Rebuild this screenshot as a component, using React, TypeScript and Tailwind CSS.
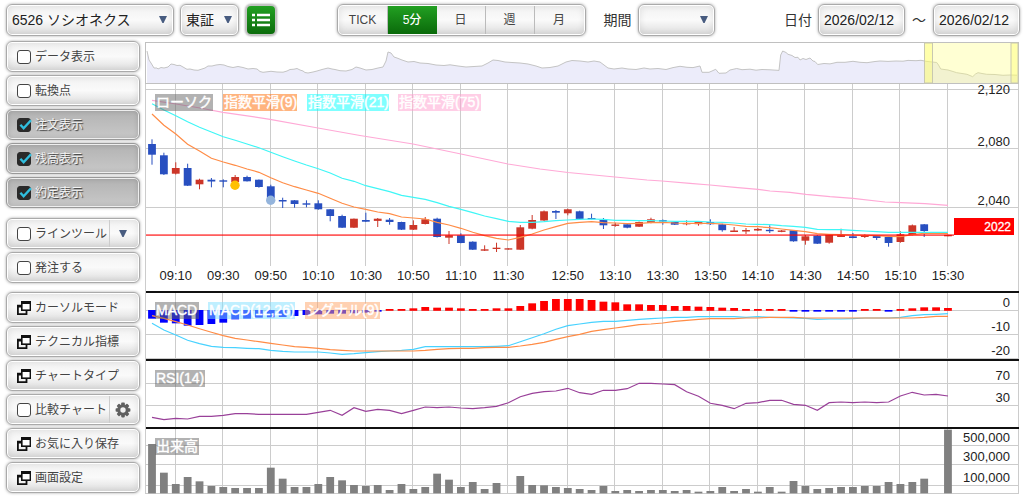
import { useState, type ReactNode } from "react";

const FACE =
  "border border-[#aaa] rounded-md shadow-[0_0_3px_rgba(0,0,0,0.35),inset_0_0_0_1px_#fff,inset_0_0_6px_2px_rgba(0,0,0,0.08)] bg-linear-to-b from-[#f2f2f2] via-[#fafafa] to-[#dcdcdc]";
const FACE_ON =
  "border border-[#999] rounded-md shadow-[0_0_3px_rgba(0,0,0,0.35),inset_0_0_0_1px_#eee,inset_0_0_5px_1px_rgba(0,0,0,0.15)] bg-linear-to-b from-[#b2b2b2] to-[#c9c9c9]";

const STEP = 11.88;
const cx = (i: number) => 152 + i * STEP;
const line = (values: number[], base: number) =>
  values.map((v, i) => `${cx(i).toFixed(1)},${(base + v / 3).toFixed(1)}`).join(" ");

// slot, body top, body bottom, high, low, rising
const candles: [number, number, number, number, number, number][] = [
  [0, 144, 154.7, 139.3, 164.7, 0], [1, 155.3, 174.3, 152.7, 175, 0], [2, 168, 173.7, 162.3, 174.5, 1],
  [3, 168, 185.7, 163.7, 186, 0], [4, 179.7, 184.3, 178.7, 189.3, 1], [5, 179.7, 181.5, 178, 187.3, 0],
  [6, 180.3, 181.7, 179.3, 187.3, 0], [7, 177, 182, 175, 182, 1], [8, 177, 181.3, 175.7, 181.5, 0],
  [9, 179.7, 187, 179.5, 187.7, 0], [10, 186.3, 198, 184.7, 198, 0], [11, 200, 201.5, 197.7, 208, 0],
  [12, 200.3, 204, 200, 207.7, 0], [13, 203.3, 204.7, 200.3, 207.3, 0], [14, 203.3, 209.3, 200.3, 209.7, 0],
  [15, 209.3, 216, 209, 221.3, 0], [16, 216, 227.7, 214.7, 228, 0], [17, 218.7, 227.7, 218.5, 228, 1],
  [18, 220, 221.7, 212.7, 222, 0], [19, 218.7, 220.9, 218, 227, 1], [20, 219.7, 222, 218, 224.7, 0],
  [21, 222, 229.7, 221.7, 230, 0], [22, 225, 229.7, 220.3, 230, 1], [23, 219.3, 224, 217, 224.5, 1],
  [24, 218.7, 237, 217.7, 237.5, 0], [25, 235.3, 237.7, 231, 244, 1], [26, 235.3, 243, 233.3, 243.3, 0],
  [27, 241.7, 249.7, 241.3, 250, 0], [28, 249.3, 250.7, 245.3, 251, 1], [29, 247.7, 249, 242.7, 252, 1],
  [30, 248.3, 249.6, 248.3, 249.6, 1], [31, 227.3, 249.7, 225, 250, 1], [32, 220, 228.7, 215, 229.3, 1],
  [33, 211.3, 220.5, 210.5, 221, 1], [34, 211, 212.7, 210, 219, 0], [35, 209.3, 213.3, 208.7, 215.3, 1],
  [36, 211.3, 218.9, 210.7, 219, 0], [37, 218, 219.2, 213.7, 219.2, 0], [38, 220, 225.3, 218, 229, 0],
  [39, 224.5, 225.9, 222.7, 226.7, 1], [40, 224.3, 227.7, 223.7, 228.3, 0], [41, 222, 226.7, 221.5, 227, 1],
  [42, 219.3, 223, 217.7, 223.3, 1], [43, 220.1, 221.5, 219.5, 224.7, 0], [44, 222, 224.7, 221.5, 225, 0],
  [45, 223, 224.3, 220.3, 225.3, 1], [46, 221.7, 224.2, 221.3, 225.7, 1], [47, 222, 224.2, 219.3, 225, 0],
  [48, 224.3, 230.2, 223.7, 231.7, 0], [49, 230.5, 232, 227, 232, 1], [50, 230, 231.5, 228, 234, 1],
  [51, 228.9, 230.5, 228, 231, 1], [52, 229.8, 231.2, 225.3, 233, 0], [53, 230.5, 231.9, 230, 232.2, 1],
  [54, 230.3, 241.3, 230, 241.7, 0], [55, 236.3, 240.7, 235, 244.7, 1], [56, 235.7, 243.7, 235, 244, 0],
  [57, 234.7, 242.7, 234.3, 243.7, 1], [58, 235.3, 237, 228.7, 237, 1], [59, 236.3, 238, 233, 238.3, 0],
  [60, 235.7, 237, 234.3, 238, 1], [61, 236, 238, 235.7, 240, 0], [62, 237, 243, 236.7, 246.7, 0],
  [63, 234.3, 242, 231.3, 242.7, 1], [64, 225.3, 235, 224.5, 235.3, 1], [65, 224.3, 231, 224, 237, 0],
  [67, 234.9, 236.3, 234.9, 236.3, 1],
];

const ema9 = [102, 136, 162, 193, 213, 235, 246, 256, 267, 277, 293, 308, 320, 330, 340, 355, 370, 381, 388, 396, 401, 411, 414, 417, 427, 435, 445, 457, 467, 475, 480, 472, 462, 450, 440, 430, 427, 425, 428, 429, 431, 430, 428, 427, 429, 430, 430, 430, 432, 435, 439, 440, 443, 447, 451, 455, 461, 463, 464, 465, 466, 467, 469, 470, 464, 460, 460, 460];
const ema21 = [71, 90, 107, 125, 142, 156, 170, 181, 192, 203, 217, 230, 243, 255, 266, 279, 295, 304, 317, 326, 335, 346, 352, 358, 368, 379, 388, 398, 408, 416, 424, 427, 427, 425, 422, 420, 418, 417, 418, 421, 421, 422, 422, 423, 424, 424, 424, 426, 427, 429, 432, 433, 434, 437, 439, 442, 448, 449, 449, 451, 453, 455, 457, 457, 457, 457, 457, 457];
const ema75 =
  "152,100.3 176,104 200,108 223,112.3 270,119.3 318,128 360,135.5 413,144 461,154 508,164 540,169 568,172.5 615,177 647,180 662,181 690,183.3 710,185 735,187.3 758,189.3 770,191 790,192.3 806,194.3 830,196.7 853,198.3 885,202 901,202.7 925,203.7 948,205.3";

const histogram = [101, 113, 115, 122, 120, 117, 113, 103, 101, 98, 97, 96, 93, 90, 88, 86, 86, 85, 83, 80, 72, 72, 70, 66, 68, 68, 70, 72, 72, 70, 70, 63, 55, 48, 42, 42, 42, 45, 50, 52, 58, 58, 60, 60, 63, 63, 65, 66, 68, 69, 72, 72, 72, 72, 80, 80, 80, 80, 80, 80, 72, 72, 80, 72, 70, 67, 67, 69];
const macd = [115, 135, 150, 166, 176, 184, 187, 188, 190, 191, 196, 199, 201, 201, 201, 204, 208, 206, 203, 200, 198, 196, 193, 185, 185, 185, 185, 185, 185, 184, 182, 170, 158, 146, 133, 122, 117, 112, 109, 109, 106, 103, 101, 99, 97, 97, 95, 95, 95, 95, 97, 95, 97, 98, 99, 100, 103, 102, 102, 101, 99, 99, 99, 97, 92, 89, 88, 86];
const signal = [92, 100, 110, 120, 131, 142, 152, 160, 165, 170, 175, 180, 185, 187, 190, 194, 196, 198, 198, 198, 198, 198, 198, 196, 193, 191, 190, 190, 188, 187, 187, 183, 178, 172, 163, 155, 148, 139, 134, 129, 124, 119, 117, 114, 109, 106, 103, 101, 101, 101, 99, 99, 97, 97, 97, 99, 99, 99, 99, 99, 99, 99, 99, 99, 99, 97, 94, 94];
const rsi = [397, 404, 400, 402, 394, 394, 391, 386, 386, 388, 388, 388, 388, 388, 382, 376, 391, 368, 379, 373, 376, 386, 376, 366, 368, 366, 369, 371, 368, 364, 353, 335, 325, 320, 318, 310, 323, 328, 316, 316, 311, 295, 295, 297, 299, 320, 334, 355, 361, 371, 355, 353, 346, 346, 358, 361, 376, 353, 351, 353, 351, 353, 351, 333, 322, 330, 328, 333];
const volume = [477, 563, 597, 576, 589, 603, 606, 609, 609, 609, 548, 581, 606, 606, 597, 576, 586, 600, 603, 600, 615, 597, 612, 606, 566, 584, 606, 591, 612, 594, 625, 573, 600, 601, 606, 609, 612, 615, 603, 618, 615, 618, 615, 615, 618, 615, 620, 618, 606, 618, 612, 620, 606, 620, 588, 603, 612, 609, 606, 606, 603, 603, 591, 597, 591, 581, 625, 434];

const overview =
  "147,51 149,60 151,63 154,68 157,68 158,69 161,67.5 164,68 168,67 171,64 174,64.5 177,65.5 180,65.3 183,67 187,69.3 190,69 194,70 198,70.3 202,69 205,68 208,66 212,66 216,65 220,64.5 224,65 228,66.5 233,67.5 238,66.5 243,67.5 248,69 253,68.5 257,69 260,71.5 263,72.3 267,71.8 271,71.3 277,72 283,72.2 287,71 290,69.5 294,69.2 297,68.5 300,70 303,71 305,72.5 308,73 313,72 317,71 322,69.5 328,68 332,69 335,69.5 340,70.7 346,71 352,69.5 356,67 360,68 366,70 372,69.5 378,68 383,67 386,61 388,52 391,53 394,57 397,58 402,60 408,62 414,61.5 420,63 428,63.5 436,65 444,65.5 450,64.8 458,66 466,67 474,66.5 482,66 488,63 493,60 498,60.5 505,62 512,62.5 520,63 528,64 536,66 542,68 550,67.5 558,66 566,62 572,60.5 580,61 588,62 594,61 600,62 608,68 614,69 622,68 628,69 636,69.5 644,68 650,69 658,68.5 666,69.5 673,67.6 680,66.3 687,67.3 693,67.6 700,66 702,72.3 709,72.3 712,71 715.7,69.3 719,73.3 726,73 730,70 736.7,68.5 742,69.7 750,69.2 756,70.2 762,69.5 770,69.8 779,70.4 780.7,55 782.7,51 786,52.5 788,54.3 792,55.5 795,57.5 798,57.3 800,60 803,58.5 806,59.5 810,58 813,61 815,61.5 817.7,64.5 824,63.5 830,63.9 837,62.3 845,62.3 853,61.3 860,62.3 867,62.7 875,61.5 880,61 888,61.4 896,61 903,61.2 908,60.4 916,60.7 921,60.3 926,61.3 932,62 936.7,62.5 938.5,65 940.7,69 948,70 952,71.2 956.7,72.7 962,73.5 967,74.3 972.7,76.7 975.5,74 978,72.7 982,73.5 986.7,74.3 995,74.5 1003,75.3 1010,75 1017,75.2";

const timeTicks: [number, string][] = [
  [2, "09:10"], [6, "09:30"], [10, "09:50"], [14, "10:10"], [18, "10:30"], [22, "10:50"], [26, "11:10"], [30, "11:30"],
  [35, "12:50"], [39, "13:10"], [43, "13:30"], [47, "13:50"], [51, "14:10"], [55, "14:30"], [59, "14:50"], [63, "15:10"], [67, "15:30"],
];

const axisLabels: [number, string][] = [
  [94, "2,120"], [146, "2,080"], [205, "2,040"], [307, "0"], [331, "-10"], [355, "-20"],
  [380, "70"], [402, "30"], [442, "500,000"], [461, "300,000"], [482, "100,000"],
];

const tags: { x: number; y: number; w: number; fill: string; text: string }[] = [
  { x: 155, y: 94, w: 58, fill: "#666666", text: "ローソク" },
  { x: 223, y: 94, w: 74, fill: "#ff6a00", text: "指数平滑(9)" },
  { x: 307, y: 94, w: 82, fill: "#00ffff", text: "指数平滑(21)" },
  { x: 398, y: 94, w: 83, fill: "#ff9dce", text: "指数平滑(75)" },
  { x: 155, y: 302, w: 44, fill: "#666666", text: "MACD" },
  { x: 208, y: 302, w: 87, fill: "#7fdfff", text: "MACD(12,26)" },
  { x: 305, y: 302, w: 75, fill: "#ffa366", text: "シグナル(9)" },
  { x: 155, y: 370, w: 50, fill: "#666666", text: "RSI(14)" },
  { x: 155, y: 438, w: 44, fill: "#666666", text: "出来高" },
];

function Chart() {
  return (
    <svg
      viewBox="145 41 875 454"
      className="block w-full h-auto font-['Liberation_Sans','Noto_Sans_CJK_JP',sans-serif]"
      role="img"
      aria-label="6526 ソシオネクス 5分"
    >
      <polygon points={`147,83 ${overview} 1017,83`} fill="#ececfa" />
      <polyline points={overview} fill="none" stroke="#c4c4c4" />
      <rect x="145.5" y="42.5" width="873" height="41" fill="none" stroke="#c0c0c0" />
      <rect x="924.5" y="43" width="93.5" height="40" fill="#ffff80" fillOpacity="0.35" />
      <rect x="924.5" y="43" width="8" height="40" fill="#ffff60" fillOpacity="0.35" stroke="#c8c8b0" />
      <rect x="1011" y="43" width="7" height="40" fill="#ffff60" fillOpacity="0.35" stroke="#c8c8b0" />

      <g stroke="#cccccc">
        {[89.5, 148.5, 207.5, 310.5, 334.5, 358.5, 383.5, 405.5, 445.5, 464.5, 485.5, 493.5].map((y) => (
          <line key={y} x1="146" x2="1018" y1={y} y2={y} />
        ))}
        {timeTicks.map(([i]) => (
          <path key={i} d={`M${Math.round(cx(i)) - 0.5} 84V266M${Math.round(cx(i)) - 0.5} 293V493`} />
        ))}
        <path d="M145.5 84V494M1018.5 84V494" />
      </g>

      {candles.map(([i, top, bottom, high, low, up]) => (
        <g key={i} fill={up ? "#cc3628" : "#284fc0"}>
          <rect x={cx(i) - 0.5} y={high} width="1" height={low - high} />
          <rect x={cx(i) - 3.9} y={top} width="7.8" height={bottom - top} />
        </g>
      ))}
      <g fill="none" strokeWidth="1.2">
        <polyline points={ema75} stroke="#ffa9d6" />
        <polyline points={line(ema9, 80)} stroke="#ff8c46" />
        <polyline points={line(ema21, 80)} stroke="#3ff6f6" />
      </g>
      <rect x="146" y="234.3" width="808" height="1.6" fill="#ff0000" fillOpacity="0.7" />
      <circle cx="235" cy="185.3" r="4.7" fill="#ffc000" />
      <circle cx="270.7" cy="200.3" r="4.7" fill="#94b4dc" />

      {histogram.map((v, i) => {
        const y = 285 + v / 3;
        const down = v > 76;
        return (
          <rect key={i} x={cx(i) - 3.9} width="7.8" y={down ? 310 : y} height={down ? y - 310 : 310.8 - y} fill={down ? "#0000ff" : "#ff0000"} />
        );
      })}
      <g fill="none" strokeWidth="1.2">
        <polyline points={line(macd, 285)} stroke="#48d2ff" />
        <polyline points={line(signal, 285)} stroke="#ff8c46" />
        <polyline points={line(rsi, 285)} stroke="#994099" />
      </g>
      {volume.map((v, i) => (
        <rect key={i} x={cx(i) - 3.9} width="7.8" y={285 + v / 3} height={(625 - v) / 3} fill="#808080" />
      ))}

      <g fill="#111111">
        {[291, 359, 427].map((y) => (
          <rect key={y} x="146" y={y} width="873" height="2" />
        ))}
      </g>

      {tags.map((t) => (
        <g key={`${t.text}${t.x}`}>
          <rect x={t.x} y={t.y} width={t.w} height="17" fill={t.fill} fillOpacity="0.5" />
          <text x={t.x + 1} y={t.y + 13} fontSize="14" fill="#ffffff" stroke="#ffffff" strokeWidth="0.4">
            {t.text}
          </text>
        </g>
      ))}

      <g fontSize="13" fill="#222222">
        {timeTicks.map(([i, label]) => (
          <text key={label} x={cx(i)} y="280" textAnchor="middle">
            {label}
          </text>
        ))}
        {axisLabels.map(([y, label]) => (
          <text key={label} x="1010" y={y} textAnchor="end">
            {label}
          </text>
        ))}
      </g>
      <rect x="954" y="218" width="60" height="17" fill="#ff0000" />
      <text x="1011" y="231" fontSize="12" fill="#ffffff" stroke="#ffffff" strokeWidth="0.3" textAnchor="end">
        2022
      </text>
    </svg>
  );
}

function Caret({ className = "" }: { className?: string }) {
  return (
    <svg viewBox="0 0 8 7" className={`h-[7px] w-2 ${className}`} aria-hidden="true">
      <path d="M0 0H8L4.6 7H3.4Z" fill="#485c80" />
    </svg>
  );
}

function Picker({ label, options, width }: { label: string; options: string[]; width: string }) {
  return (
    <span className={`relative inline-flex ${width}`}>
      <select
        aria-label={label}
        className={`h-8 w-full appearance-none pl-[5px] pr-5 text-sm text-[#222] ${FACE}`}
      >
        {options.map((o) => (
          <option key={o}>{o}</option>
        ))}
      </select>
      <Caret className="pointer-events-none absolute right-[7px] top-3" />
    </span>
  );
}

function Toggle({ label, initial = false, extra }: { label: string; initial?: boolean; extra?: ReactNode }) {
  const [on, setOn] = useState(initial);
  return (
    <div className={`flex h-[31px] items-center ${on ? FACE_ON : FACE}`}>
      <label
        className={`flex h-full flex-1 items-center gap-1 pl-[10px] whitespace-nowrap ${
          on ? "text-[#f4f4f4] [text-shadow:1px_1px_1px_#333]" : "text-[#444]"
        }`}
      >
        <span className="relative flex size-[14px] shrink-0">
          <input
            type="checkbox"
            checked={on}
            onChange={() => setOn(!on)}
            className="size-[14px] appearance-none rounded-[3px] border border-[#444] bg-white checked:border-[#2a2a2a] checked:bg-[#2a2a2a]"
          />
          {on && (
            <svg viewBox="0 0 16 14" className="pointer-events-none absolute left-0 top-0 h-[14px] w-4" aria-hidden="true">
              <path d="M3.4 6.8L6.6 10.2L14 2.2" fill="none" stroke="#30bede" strokeWidth="2.4" />
            </svg>
          )}
        </span>
        {label}
      </label>
      {extra}
    </div>
  );
}

function WindowIcon() {
  return (
    <svg viewBox="0 0 14 14" className="size-[14px] shrink-0" aria-hidden="true">
      <path d="M4 3.8H0V14H10.4V9.6H8.6V12.2H1.8V6.6H4Z" fill="#111" />
      <path d="M4 0H14V10H4Z" fill="#111" />
      <path d="M5.6 3H12.6V8.4H5.6Z" fill="#fff" />
    </svg>
  );
}

function GearIcon() {
  return (
    <svg viewBox="0 0 16 16" className="size-4" aria-hidden="true">
      <g fill="#606060">
        {[0, 45, 90, 135].map((a) => (
          <rect key={a} x="6.2" y="0.6" width="3.6" height="14.8" rx="0.8" transform={`rotate(${a} 8 8)`} />
        ))}
        <circle cx="8" cy="8" r="5.8" />
      </g>
      <circle cx="8" cy="8" r="2.7" fill="#f2f2f2" />
    </svg>
  );
}

function Command({ label }: { label: string }) {
  return (
    <button type="button" className={`flex h-[31px] items-center gap-1 pl-[10px] text-[#444] whitespace-nowrap ${FACE}`}>
      <WindowIcon />
      {label}
    </button>
  );
}

const SIDE = "flex h-[27px] w-[30px] items-center justify-center border-l border-[#ccc] pr-1";

function DateField({ label }: { label: string }) {
  const [value, setValue] = useState("2026/02/12");
  return (
    <input
      type="text"
      aria-label={label}
      value={value}
      onChange={(e) => setValue(e.target.value)}
      className={`h-8 w-[87px] pl-[5px] text-sm text-[#222] ${FACE}`}
    />
  );
}

export default function App() {
  const [span, setSpan] = useState("5分");
  return (
    <div className="min-h-screen bg-white text-xs text-[#333] font-['Liberation_Sans','Noto_Sans_CJK_JP',sans-serif]">
      <header className="flex items-center justify-between pt-1 pl-[6px] pr-1">
        <div className="flex items-center gap-[6px]">
          <Picker label="銘柄" options={["6526 ソシオネクス"]} width="w-[168px]" />
          <Picker label="市場" options={["東証"]} width="w-[59px]" />
          <button
            type="button"
            aria-label="一覧"
            className="flex size-8 items-center justify-center rounded-md border-2 border-[#c4c4c4] bg-linear-to-b from-[#22a022] to-[#0c6c0c] shadow-[0_0_2px_rgba(0,0,0,0.4)]"
          >
            <svg viewBox="0 0 18 14" className="h-[14px] w-[18px]" aria-hidden="true">
              <path d="M0 2H3M5 2H18M0 7H3M5 7H18M0 12H3M5 12H18" stroke="#fff" strokeWidth="2.6" />
            </svg>
          </button>
        </div>
        <div className="flex items-center gap-[18px] pr-[10px]">
          <div className={`flex h-8 overflow-hidden p-px ${FACE}`}>
            {["TICK", "5分", "日", "週", "月"].map((s) => (
              <button
                key={s}
                type="button"
                aria-pressed={span === s}
                onClick={() => setSpan(s)}
                className={
                  span === s
                    ? "w-[49px] bg-linear-to-b from-[#22a022] to-[#0a6a0a] font-medium text-white"
                    : "w-[49px] border-r border-[#bbb] text-[#444] last:border-r-0"
                }
              >
                {s}
              </button>
            ))}
          </div>
          <div className="flex items-center gap-[6px] text-sm">
            <span>期間</span>
            <Picker label="期間" options={[""]} width="w-[77px]" />
          </div>
        </div>
        <div className="flex items-center text-sm">
          <span className="mr-[6px]">日付</span>
          <DateField label="開始日" />
          <span className="w-7 text-center">～</span>
          <DateField label="終了日" />
        </div>
      </header>

      <div className="flex items-start pt-[5px] pr-1">
        <nav className="flex w-[145px] shrink-0 flex-col gap-[3px] pl-[6px] pr-[5px]">
          <Toggle label="データ表示" />
          <Toggle label="転換点" />
          <Toggle label="注文表示" initial />
          <Toggle label="残高表示" initial />
          <Toggle label="約定表示" initial />
          <div className="mt-[7px] flex flex-col gap-[3px]">
            <Toggle
              label="ラインツール"
              extra={
                <button type="button" aria-label="ラインツールの種類" className={SIDE}>
                  <Caret />
                </button>
              }
            />
            <Toggle label="発注する" />
          </div>
          <div className="mt-[6px] flex flex-col gap-[3px]">
            <Command label="カーソルモード" />
            <Command label="テクニカル指標" />
            <Command label="チャートタイプ" />
            <Toggle
              label="比較チャート"
              extra={
                <button type="button" aria-label="比較チャートの設定" className={SIDE}>
                  <GearIcon />
                </button>
              }
            />
            <Command label="お気に入り保存" />
            <Command label="画面設定" />
          </div>
        </nav>
        <main className="min-w-0 flex-1">
          <Chart />
        </main>
      </div>
    </div>
  );
}
